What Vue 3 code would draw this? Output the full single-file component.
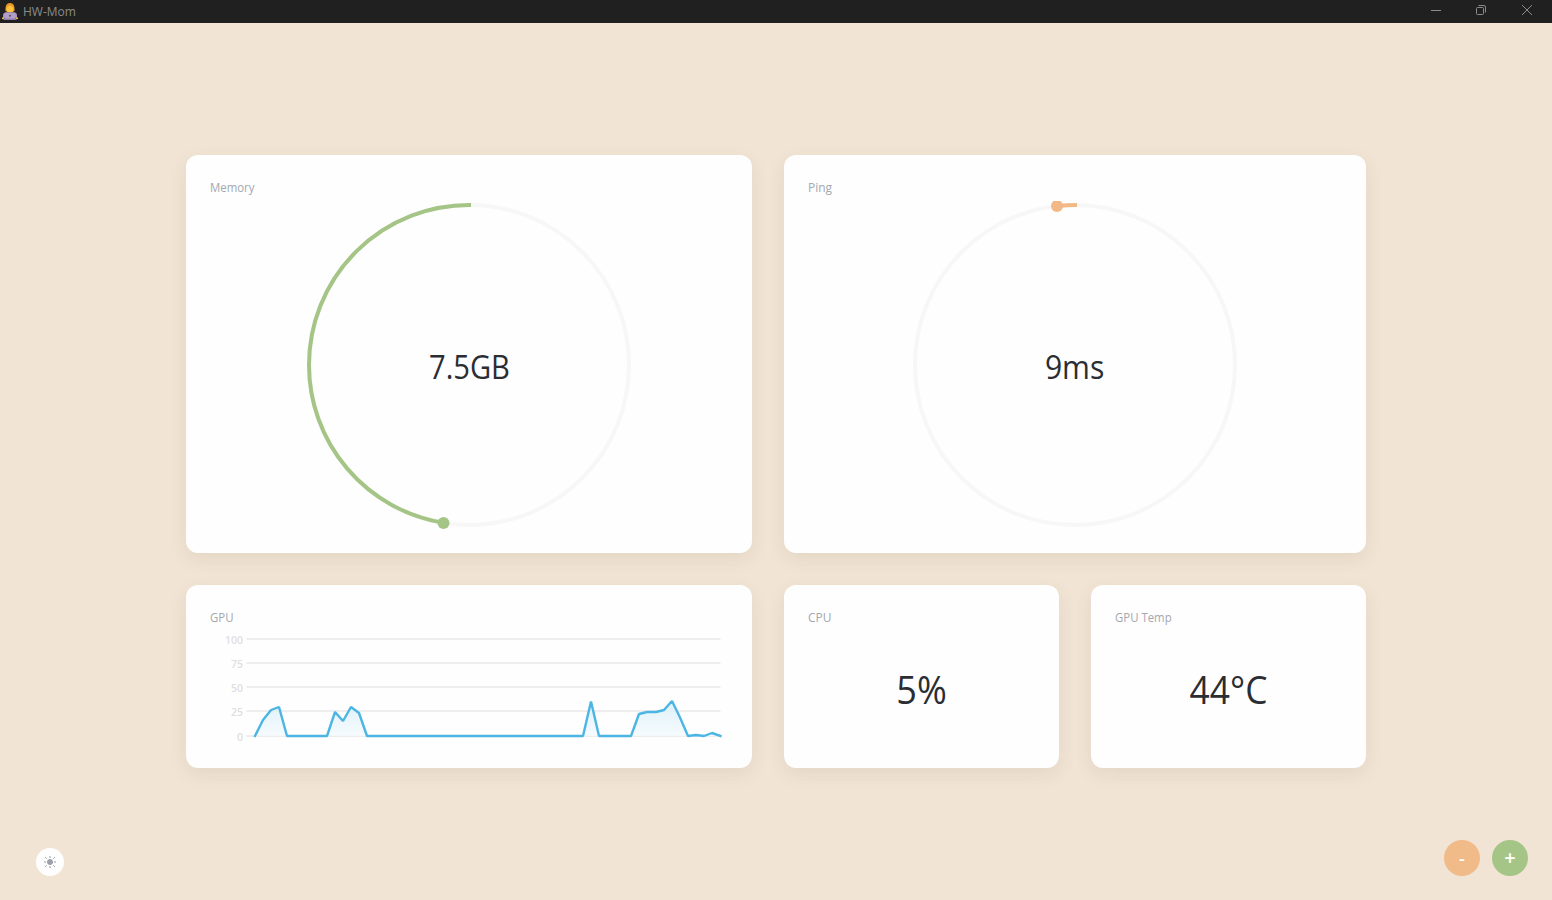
<script setup>
const ticks = [
  { label: '100', y: 11 },
  { label: '75', y: 35 },
  { label: '50', y: 59 },
  { label: '25', y: 83 },
  { label: '0', y: 108 },
]

const heights = [
  0, 16, 26, 29, 0, 0, 0, 0, 0, 0, 24, 15, 29, 23,
  ...Array(28).fill(0),
  34.5, 0, 0, 0, 0, 0, 22, 24, 24, 26, 35, 18.5, 0, 1, 0, 3, 0,
]
const points = heights.map((h, i) => [Math.round(45 + i * 8.01), 108 - h])
points[points.length - 1][0] = 510.5
const line = points.map((p) => p.join(',')).join(' ')
const area = `45,108 ${line} 510.5,108`
</script>

<template>
  <div class="window">
    <header class="titlebar">
      <svg class="logo" width="18" height="18" viewBox="0 0 18 18">
        <path d="M5.500 8.500C5.200 4 6.500 1 10 1s4.800 3 4.500 7.500L13 10H7z" fill="#e99a25" />
        <path d="M6.500 6Q8 4 10 3.500Q12 4 13.500 6Q13.500 10.500 10 10.500T6.500 6z" fill="#fdc33f" />
        <path d="M3 16v-3q0-2.500 3-2.500h8q3 0 3 2.500v3z" fill="#a78abf" />
        <rect x="4.500" y="10.500" width="11" height="7" rx=".8" fill="#b19fc8" />
        <path d="M3.500 16.500h13V18h-13z" fill="#8e7da8" />
        <path d="M2 15.500h2V17H2zm14 0h2V17h-2z" fill="#f2b53d" />
        <circle cx="10" cy="13.800" r="1" fill="#574765" />
      </svg>
      <span class="app-name">HW-Mom</span>
      <svg class="controls" width="106" height="20" viewBox="0 0 106 20" fill="none" stroke="#8b8b8b">
        <path d="M1 10.500h10" />
        <rect x="46.500" y="7.500" width="7" height="7" rx="1" />
        <path d="M48.500 5.500h5.500q1.500 0 1.500 1.500v5.500" />
        <path d="M92 5l10 10M102 5L92 15" />
      </svg>
    </header>

    <main class="cards">
      <section class="card">
        <h2 class="snug">Memory</h2>
        <div class="gauge">
          <svg width="328" height="328" viewBox="0 0 328 328" fill="none" stroke-width="4">
            <circle cx="164" cy="164" r="160" stroke="#f7f7f7" />
            <path d="M166 4A160 160 0 0 0 4 164A160 160 0 0 0 138.500 321.800" stroke="#a5c587" />
            <circle cx="138.500" cy="322" r="6" fill="#a5c587" />
          </svg>
          <span class="reading memory">7.5GB</span>
        </div>
      </section>

      <section class="card">
        <h2>Ping</h2>
        <div class="gauge">
          <svg width="328" height="328" viewBox="0 0 328 328" fill="none" stroke-width="4">
            <circle cx="164" cy="164" r="160" stroke="#f7f7f7" />
            <path d="M166 4Q156 4 146 5" stroke="#f2b987" />
            <circle cx="146" cy="5" r="6" fill="#f2b987" />
          </svg>
          <span class="reading ping">9ms</span>
        </div>
      </section>

      <section class="card">
        <h2 class="snug">GPU</h2>
        <svg class="chart" width="518" height="120" viewBox="0 0 518 120">
          <defs>
            <linearGradient id="usage" x1="0" y1="73" x2="0" y2="108" gradientUnits="userSpaceOnUse">
              <stop offset="0" stop-color="#d9eef8" />
              <stop offset="1" stop-color="#f5fbfe" />
            </linearGradient>
          </defs>
          <g v-for="tick in ticks" :key="tick.label">
            <path :d="`M36.500 ${tick.y}H510.500`" stroke="#eee" stroke-width="2" />
            <text x="33" :y="tick.y + 5" text-anchor="end">{{ tick.label }}</text>
          </g>
          <polygon :points="area" fill="url(#usage)" fill-opacity=".85" />
          <polyline :points="line" fill="none" stroke="#4bb5e3" stroke-width="2.4" stroke-linejoin="bevel" stroke-linecap="square" />
        </svg>
      </section>

      <div class="pair">
        <section class="card">
          <h2>CPU</h2>
          <div class="value cpu">5%</div>
        </section>
        <section class="card">
          <h2 class="snug">GPU Temp</h2>
          <div class="value temp">44°C</div>
        </section>
      </div>
    </main>

    <footer class="actions">
      <button class="theme" aria-label="Theme">
        <svg width="14" height="14" viewBox="0 0 14 14" stroke="#9a9ca6">
          <circle cx="7" cy="7" r="2.500" fill="#9c9fa9" />
          <path d="M7 1v2M7 11v2M1 7h2M11 7h2M2.200 2.200l1.500 1.500M10.300 10.300l1.500 1.500M2.200 11.800l1.500-1.500M10.300 3.700l1.500-1.500" />
        </svg>
      </button>
      <div class="zoom">
        <button class="minus">-</button>
        <button class="plus">+</button>
      </div>
    </footer>
  </div>
</template>

<style>
body {
  margin: 0;
}
</style>

<style scoped>
.window {
  display: flex;
  flex-direction: column;
  box-sizing: border-box;
  width: 1552px;
  height: 900px;
  overflow: hidden;
  background: #f1e4d4;
  font-family: "Open Sans", "Noto Sans", sans-serif;
}
.titlebar {
  display: flex;
  flex: none;
  height: 23px;
  background: #202020;
}
.logo {
  margin-top: 2px;
}
.app-name {
  margin-left: 5px;
  color: #8b8b8b;
  font-size: 12px;
  line-height: 24px;
}
.controls {
  margin: 0 16px 0 auto;
}
.cards {
  display: grid;
  grid-template: 398px 183px / 566px 582px;
  gap: 32px;
  padding: 132px 186px 0;
}
.card {
  box-sizing: border-box;
  display: flex;
  flex-direction: column;
  padding: 24px;
  border-radius: 12px;
  background: #fefefe;
  box-shadow: 0 6px 18px rgba(110, 75, 40, 0.09);
}
h2 {
  flex: none;
  margin: 0;
  color: #a4a7b0;
  font-size: 12px;
  font-weight: 400;
  line-height: 18px;
  transform-origin: left;
}
.snug {
  transform: scaleX(0.95);
}
.gauge {
  display: grid;
  place-items: center;
  margin-top: 4px;
}
.gauge > * {
  grid-area: 1 / 1;
}
.gauge svg {
  display: block;
}
.reading {
  color: #2a2d32;
  font-size: 32px;
  line-height: 40px;
  margin-top: 4px;
}
.memory {
  transform: scaleX(0.91);
}
.ping {
  transform: scaleX(0.94);
}
.chart {
  display: block;
  flex: none;
  margin-top: 1px;
}
.chart text {
  fill: #dedee1;
  font-size: 10.5px;
  font-weight: 600;
}
.pair {
  display: grid;
  grid-template-columns: 1fr 1fr;
  gap: 32px;
}
.value {
  margin-top: 37px;
  color: #2a2d32;
  font-size: 38px;
  line-height: 50px;
  text-align: center;
}
.cpu {
  transform: scaleX(0.95);
}
.temp {
  transform: scaleX(0.93);
}
.actions {
  display: flex;
  justify-content: space-between;
  margin-top: auto;
  padding: 0 24px 24px 36px;
}
button {
  display: grid;
  place-items: center;
  border: 0;
  padding: 0;
  border-radius: 50%;
  color: #fff;
  font: 600 18px/36px "Open Sans", "Noto Sans", sans-serif;
}
.theme {
  width: 28px;
  height: 28px;
  margin-top: 8px;
  background: #fefefe;
}
.zoom {
  display: flex;
  gap: 12px;
}
.minus,
.plus {
  width: 36px;
  height: 36px;
}
.minus {
  background: #f0bb89;
}
.plus {
  background: #a5c587;
  font-size: 20px;
}
</style>
